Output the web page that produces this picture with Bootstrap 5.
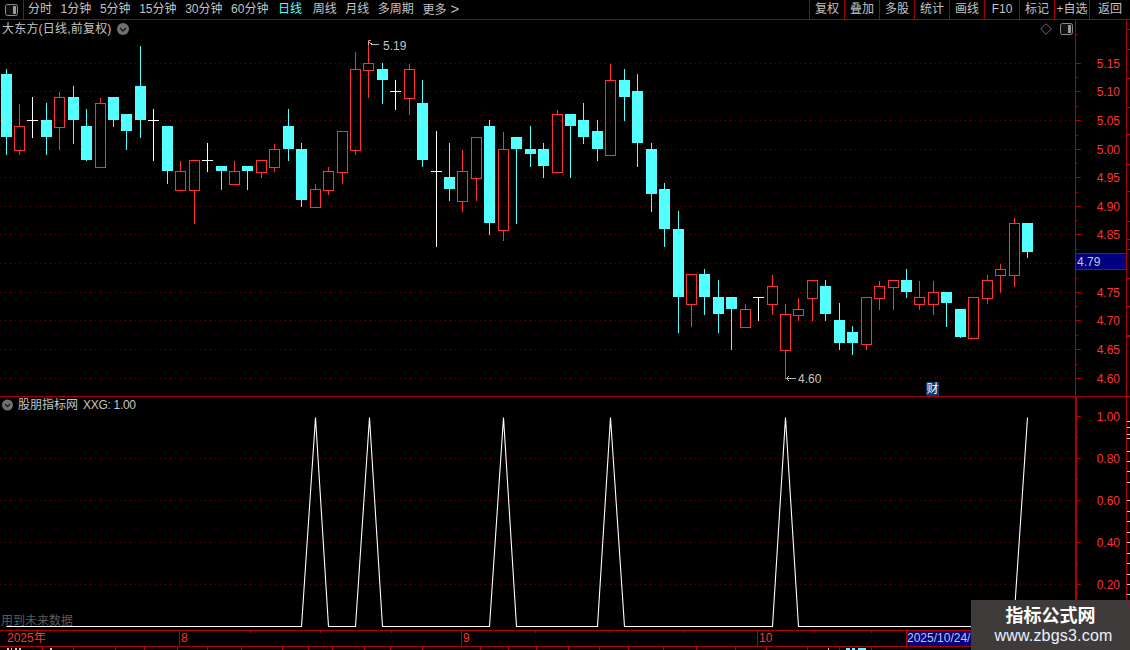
<!doctype html>
<html lang="zh">
<head>
<meta charset="utf-8">
<title>大东方</title>
<link href="https://cdn.jsdelivr.net/npm/bootstrap@5.3.0/dist/css/bootstrap.min.css" rel="stylesheet">
<style>
html,body{background:#000;margin:0;height:650px;overflow:hidden}
body{font:12px/16px "Liberation Sans","Noto Sans CJK SC",sans-serif;color:#c4c4c4;width:1130px}
.term{width:1130px;height:650px}
.tbar{height:20px;border-bottom:1px solid #a80000;flex:none}
.tbar-ico{width:24px;border-right:1px solid #a80000}
.tabs{padding-left:4px;gap:8.6px;line-height:19px}
.tab-on{color:#54ffff;margin-left:1px;margin-right:2px}
.more-arrow{font-size:15px;margin-left:4px;line-height:17px}
.tcell{width:35px;border-left:1px solid #a80000;text-align:center;line-height:19px;white-space:nowrap}
.tcell-end{width:41px}
.pane-main{height:377px;border-bottom:1px solid #a80000;flex:none}
.pane-sub{height:234px;border-bottom:1px solid #b80000;flex:none}
.plot{width:1075px;flex:none}
.plot svg,.ax svg{display:block}
.ax{width:55px;flex:none}
.legend{left:2px;top:1px;line-height:16px}
.legend .ttl{letter-spacing:.2px}
.legend-sub{left:2px;top:0}
.legend-sub .nm{margin-left:4px}
.legend-sub .val{margin-left:5px;letter-spacing:-.3px}
.warn{left:1px;bottom:1px;color:#5c5c5c}
.ico-tr{right:2px;top:3px}
.high,.low{line-height:14px}
.high{left:383px;top:19px}
.low{left:798px;top:352px}
.cai{left:926px;top:362px;width:13px;height:14px;line-height:14px;background:#063a6e;color:#fff;text-align:center}
.dstrip{height:16px;border-bottom:1px solid #b00000;flex:none;line-height:15px;color:#ff3232}
.dstrip svg,.fstrip svg{display:block}
.dlab{top:0}
.d-y{left:7px}.d-8{left:181px}.d-9{left:463px}.d-10{left:759px}
.dbox{left:906px;top:0;width:66px;height:15px;background:#000080;color:#c6c6dc;border-left:1px solid #b00000;overflow:hidden;white-space:nowrap}
.fstrip{height:3px;overflow:hidden;flex:none}
.wm{right:0;bottom:0;width:159px;height:50px;background:#403b3b;color:#fff;text-align:center}
.wm-t{font-weight:700;font-size:18px;line-height:20px;margin-top:6px}
.wm-u{font-size:16px;line-height:20px;letter-spacing:.2px;color:#e8f0ff;padding-left:6px}
</style>
</head>
<body>
<div class="term position-relative d-flex flex-column">
  <div class="tbar d-flex">
    <div class="tbar-ico d-flex align-items-center justify-content-center">
      <svg width="13" height="12" viewBox="0 0 13 12"><rect x=".5" y=".5" width="12" height="11" rx="2" fill="#111" stroke="#8a8a8a"/><rect x="8" y="2" width="3" height="8" fill="#9a9a9a"/></svg>
    </div>
    <div class="tabs d-flex">
      <span>分时</span><span>1分钟</span><span>5分钟</span><span>15分钟</span><span>30分钟</span><span>60分钟</span>
      <span class="tab-on">日线</span><span>周线</span><span>月线</span><span>多周期</span><span>更多<span class="more-arrow">&gt;</span></span>
    </div>
    <div class="ms-auto d-flex">
      <span class="tcell">复权</span><span class="tcell">叠加</span><span class="tcell">多股</span><span class="tcell">统计</span><span class="tcell">画线</span><span class="tcell">F10</span><span class="tcell">标记</span><span class="tcell">+自选</span><span class="tcell tcell-end">返回</span>
    </div>
  </div>

  <div class="pane-main d-flex">
    <div class="plot position-relative">
      <svg id="kline" width="1075" height="376" viewBox="0 20 1075 376" shape-rendering="crispEdges"></svg>
      <div class="legend position-absolute d-flex align-items-center gap-1">
        <span class="ttl">大东方(日线,前复权)</span>
        <svg width="14" height="14" viewBox="0 0 14 14"><circle cx="7" cy="7" r="6" fill="#707070"/><path d="M4 6l3 3 3-3" fill="none" stroke="#1c1c1c" stroke-width="1.5"/></svg>
      </div>
      <div class="ico-tr position-absolute d-flex align-items-center gap-2">
        <svg width="12" height="12" viewBox="0 0 12 12"><path d="M6 .7L11.3 6 6 11.3.7 6z" fill="none" stroke="#6e6e6e"/></svg>
        <svg width="13" height="12" viewBox="0 0 13 12"><rect x=".5" y=".5" width="12" height="11" rx="2" fill="#111" stroke="#8a8a8a"/><rect x="8" y="2" width="3" height="8" fill="#9a9a9a"/></svg>
      </div>
      <span class="high position-absolute">5.19</span>
      <span class="low position-absolute">4.60</span>
      <span class="cai position-absolute">财</span>
    </div>
    <div class="ax"><svg id="axm" width="55" height="376" viewBox="1075 20 55 376"></svg></div>
  </div>

  <div class="pane-sub d-flex">
    <div class="plot position-relative">
      <svg id="subc" width="1075" height="233" viewBox="0 397 1075 233"></svg>
      <div class="legend-sub position-absolute d-flex align-items-center">
        <svg width="12" height="16" viewBox="0 0 12 16"><circle cx="5.5" cy="8" r="5.5" fill="#707070"/><path d="M3 7l2.5 2.5L8 7" fill="none" stroke="#1c1c1c" stroke-width="1.3"/></svg>
        <span class="nm">股朋指标网</span><span class="val">XXG: 1.00</span>
      </div>
      <span class="warn position-absolute">用到未来数据</span>
    </div>
    <div class="ax"><svg id="axs" width="55" height="233" viewBox="1075 397 55 233"></svg></div>
  </div>

  <div class="dstrip position-relative">
    <svg id="dt" width="1130" height="15" viewBox="0 631 1130 15" shape-rendering="crispEdges"></svg>
    <span class="dlab d-y position-absolute">2025年</span>
    <span class="dlab d-8 position-absolute">8</span>
    <span class="dlab d-9 position-absolute">9</span>
    <span class="dlab d-10 position-absolute">10</span>
    <span class="dbox position-absolute">2025/10/24/</span>
  </div>
  <div class="fstrip"><svg id="ft" width="1130" height="3" viewBox="0 647 1130 3" shape-rendering="crispEdges"></svg></div>

  <div class="wm position-absolute">
    <div class="wm-t">指标公式网</div>
    <div class="wm-u">www.zbgs3.com</div>
  </div>
</div>

<script src="https://cdn.jsdelivr.net/npm/bootstrap@5.3.0/dist/js/bootstrap.bundle.min.js"></script>
<script>
var CY='#54ffff',RD='#ff3232',WH='#ffffff',GRID='#800000',AX='#b00000',LB='#ff3232';
var K=[
['c',69,74,137,154],['r',104,126,150,154],['w',97,120,137],['c',103,120,137,154],['r',92,97,127,149],['c',86,97,120,143],
['c',109,126,160,160],['r',98,103,167,167],['c',97,97,120,126],['c',114,114,131,149],['c',46,86,120,137],['w',109,120,160],
['c',126,126,171,183],['r',161,171,190,190],['r',160,160,190,223],['w',143,160,171],['c',166,166,171,189],['r',161,171,184,184],
['c',166,166,171,189],['r',160,160,172,177],['r',144,149,167,171],['c',109,126,149,160],['c',143,149,200,206],['r',184,189,207,207],
['r',167,171,190,194],['r',131,131,172,183],['r',52,69,150,154],['r',40,63,70,97],['c',63,69,80,103],['w',80,91,109],
['r',64,69,98,114],['c',80,103,160,166],['w',131,171,246],['c',143,177,189,200],['r',150,171,201,211],['r',137,137,178,200],
['c',120,126,223,234],['r',132,149,230,240],['c',137,137,149,223],['c',126,149,154,166],['c',143,149,166,177],['r',110,114,172,172],
['c',114,114,126,177],['c',103,120,137,143],['c',120,131,149,160],['r',64,80,155,155],['c',69,80,97,120],['c',74,91,143,166],
['c',143,149,194,211],['c',183,189,229,246],['c',211,229,297,332],['r',274,274,304,326],['c',269,274,297,314],['c',280,297,314,332],
['c',297,297,309,349],['r',304,309,327,327],['t',297,320],['r',275,286,304,314],['r',304,314,350,378],['r',298,309,315,320],
['r',280,280,298,320],['c',280,286,314,320],['c',303,320,343,349],['c',326,332,343,354],['r',297,297,344,349],['r',281,286,298,309],
['r',280,280,287,309],['c',269,280,292,297],['r',281,297,304,309],['r',281,292,304,314],['c',292,292,303,326],['c',309,309,337,337],
['r',297,297,338,338],['r',275,280,298,303],['r',264,269,275,292],['r',218,223,275,286],['c',223,223,252,257]];
function X(i){return Math.floor(6+13.44*i)}
function R(x,y,w,h,f){return '<rect x="'+x+'" y="'+y+'" width="'+w+'" height="'+h+'" fill="'+f+'"/>'}
function dotted(y,x2){return '<line x1="0" x2="'+x2+'" y1="'+(y+.5)+'" y2="'+(y+.5)+'" stroke="'+GRID+'" stroke-dasharray="1 4"/>'}
var s='';
[63,91,120,149,177,206,234,263,292,320,349,378].forEach(function(y){s+=dotted(y,1075)});
K.forEach(function(k,i){
  var x=X(i),t=k[0];
  if(t=='w'){s+=R(x,k[1],1,k[3]-k[1]+1,WH)+R(x-5,k[2],11,1,WH);}
  else if(t=='t'){s+=R(x,k[1],1,k[2]-k[1]+1,WH)+R(x-5,k[1],11,1,WH);}
  else if(t=='c'){s+=R(x,k[1],1,k[4]-k[1]+1,CY)+R(x-5,k[2],11,k[3]-k[2],CY);}
  else{s+=R(x,k[1],1,k[2]-k[1],RD)+R(x,k[3],1,k[4]-k[3]+1,RD)+
    '<rect x="'+(x-4.5)+'" y="'+(k[2]+.5)+'" width="10" height="'+(k[3]-k[2])+'" fill="none" stroke="'+RD+'"/>';}
});
// high and low markers
s+='<path d="M368.5 40.5V45M368.5 40.5H371M369 42l3 2.5h7" fill="none" stroke="#b8b8b8"/>';
s+='<path d="M786 378.5h10M786 378.5l3-2M786 378.5l3 2" fill="none" stroke="#b8b8b8"/>';
document.getElementById('kline').innerHTML=s;

function axis(labels,minor,thick){
  var a='<rect x="1075" y="0" width="'+thick+'" height="700" fill="'+AX+'"/><rect x="1126" y="0" width="1" height="700" fill="'+AX+'"/>';
  labels.forEach(function(l){
    a+=R(1075,l[1],6,1,AX);
    a+='<text x="1120" y="'+(l[1]+5)+'" text-anchor="end" fill="'+LB+'" font-size="12" font-family="Liberation Sans">'+l[0]+'</text>';
  });
  minor.forEach(function(y){a+=R(1075,y,3,1,AX)});
  return a;
}
var lm=[['5.15',63],['5.10',91],['5.05',120],['5.00',149],['4.95',177],['4.90',206],['4.85',234],['4.80',263],['4.75',292],['4.70',320],['4.65',349],['4.60',378]];
var minors=[];for(var i=0;i<lm.length-1;i++)minors.push(Math.round((lm[i][1]+lm[i+1][1])/2));
minors.push(34);
var am=axis(lm.filter(function(l){return l[0]!='4.80'}),minors.concat([263]),1);
am+=R(1075,263,6,1,AX);
am+='<rect x="1075.5" y="253.5" width="51" height="16" fill="#000080" stroke="'+AX+'"/>';
am+='<text x="1077" y="266" fill="#c8c8c8" font-size="12" font-family="Liberation Sans">4.79</text>';
[29,49,78,107,134,164,191,221,239,249,278,306,335,336].forEach(function(y){am+=R(1127,y,3,1,AX)});
document.getElementById('axm').innerHTML=am;

var ss='';
[458,500,542,584].forEach(function(y){ss+=dotted(y,1075)});
var peaks=[23,27,37,45,58],pts=[[6,626]];
peaks.forEach(function(p){var a=6+13.43*p;pts.push([a-13.43,626],[a,417],[a+13.43,626]);});
var last=6+13.43*76;pts.push([last-13.43,626],[last,417]);
ss+='<polyline points="'+pts.map(function(p){return (Math.round(p[0])+.5)+','+(p[1]+.5)}).join(' ')+'" fill="none" stroke="#fff" stroke-width="1.1"/>';
document.getElementById('subc').innerHTML=ss;

var ls=[['1.00',416],['0.80',458],['0.60',500],['0.40',542],['0.20',584]];
var ma=[437,479,521,563,605];
var as=axis(ls,ma,2);
[421,427,434,438,451,461,471,482,500,511,521,532,542,553,563,574,584,594].forEach(function(y){as+=R(1127,y,3,1,'#c8c8c8')});
document.getElementById('axs').innerHTML=as;

var dt='';
[179,461,757].forEach(function(x){dt+=R(x,631,1,15,AX)});
[250,320,391,535,609,683,814,871].forEach(function(x){dt+=R(x,631,1,2,AX)});
document.getElementById('dt').innerHTML=dt;

var ft='';
[42,73,115,144,177,207,241,282,308,332,364,390,422,480,508,536,568,599,628,663,696,735,766,807,839,871].forEach(function(x){ft+=R(x,647,1,3,AX)});
[[7,2],[11,1],[15,2],[19,2],[50,2],[828,1],[846,4],[852,3],[858,8]].forEach(function(f,i){ft+=R(f[0],648,f[1],2,i>5?CY:'#c8c8c8')});
document.getElementById('ft').innerHTML=ft;
</script>
</body>
</html>
